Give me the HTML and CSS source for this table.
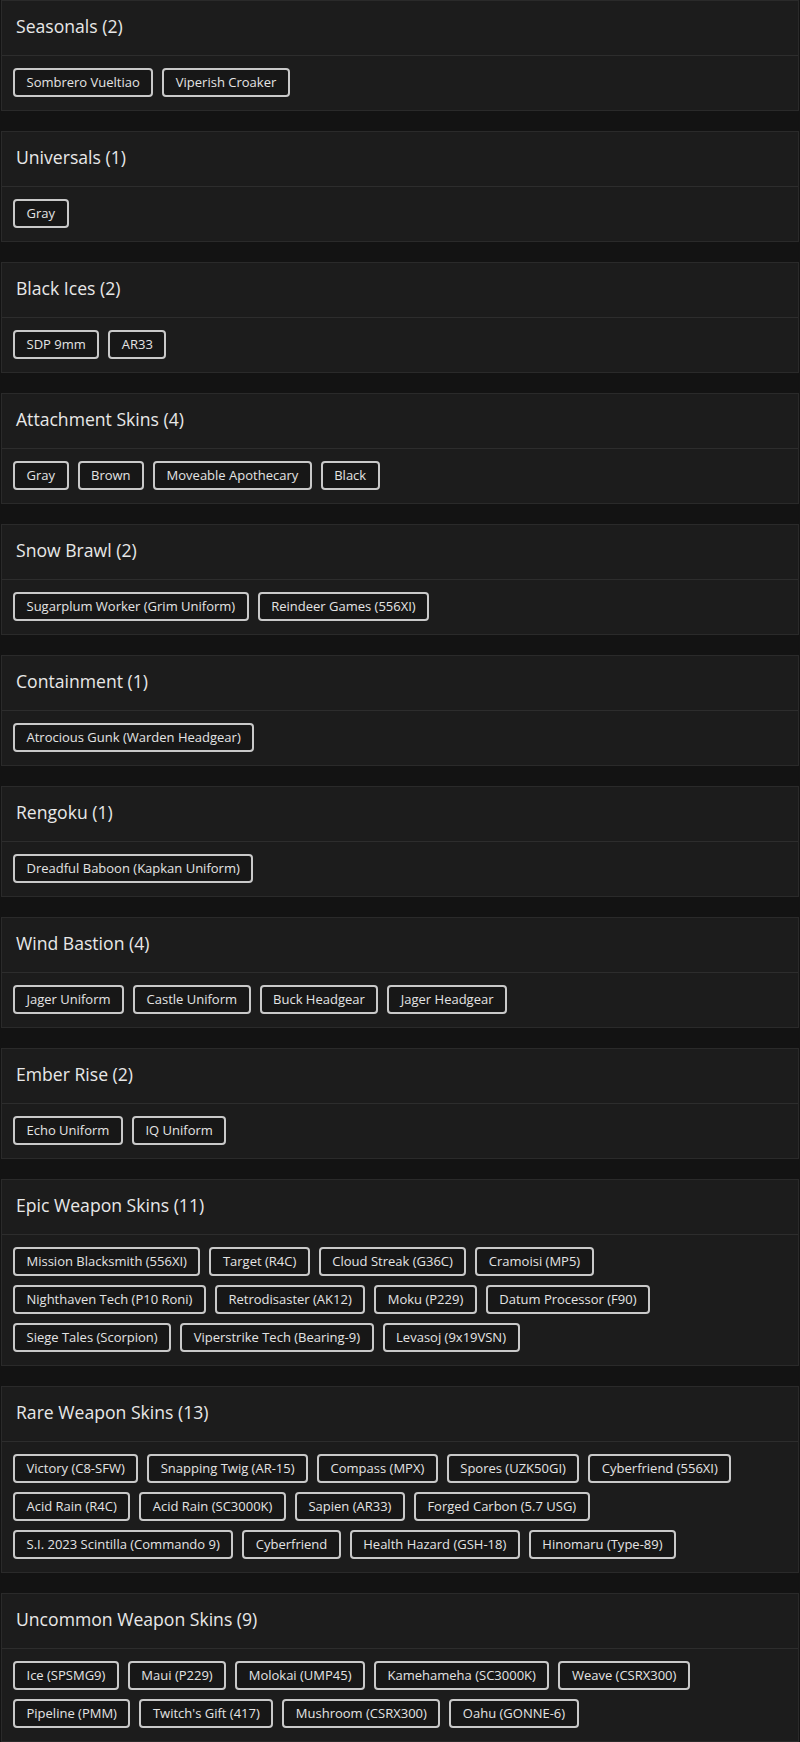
FILE: index.html
```html
<!DOCTYPE html>
<html lang="en">
<head>
<meta charset="utf-8">
<title>Skins</title>
<link rel="stylesheet" href="styles.css">
</head>
<body>
<main class="list">
  <section class="card">
    <h2 class="card-head">Seasonals (2)</h2>
    <div class="card-body">
      <span class="chip">Sombrero Vueltiao</span>
      <span class="chip">Viperish Croaker</span>
    </div>
  </section>
  <section class="card">
    <h2 class="card-head">Universals (1)</h2>
    <div class="card-body">
      <span class="chip">Gray</span>
    </div>
  </section>
  <section class="card">
    <h2 class="card-head">Black Ices (2)</h2>
    <div class="card-body">
      <span class="chip">SDP 9mm</span>
      <span class="chip">AR33</span>
    </div>
  </section>
  <section class="card">
    <h2 class="card-head">Attachment Skins (4)</h2>
    <div class="card-body">
      <span class="chip">Gray</span>
      <span class="chip">Brown</span>
      <span class="chip">Moveable Apothecary</span>
      <span class="chip">Black</span>
    </div>
  </section>
  <section class="card">
    <h2 class="card-head">Snow Brawl (2)</h2>
    <div class="card-body">
      <span class="chip">Sugarplum Worker (Grim Uniform)</span>
      <span class="chip">Reindeer Games (556XI)</span>
    </div>
  </section>
  <section class="card">
    <h2 class="card-head">Containment (1)</h2>
    <div class="card-body">
      <span class="chip">Atrocious Gunk (Warden Headgear)</span>
    </div>
  </section>
  <section class="card">
    <h2 class="card-head">Rengoku (1)</h2>
    <div class="card-body">
      <span class="chip">Dreadful Baboon (Kapkan Uniform)</span>
    </div>
  </section>
  <section class="card">
    <h2 class="card-head">Wind Bastion (4)</h2>
    <div class="card-body">
      <span class="chip">Jager Uniform</span>
      <span class="chip">Castle Uniform</span>
      <span class="chip">Buck Headgear</span>
      <span class="chip">Jager Headgear</span>
    </div>
  </section>
  <section class="card">
    <h2 class="card-head">Ember Rise (2)</h2>
    <div class="card-body">
      <span class="chip">Echo Uniform</span>
      <span class="chip">IQ Uniform</span>
    </div>
  </section>
  <section class="card">
    <h2 class="card-head">Epic Weapon Skins (11)</h2>
    <div class="card-body">
      <span class="chip">Mission Blacksmith (556XI)</span>
      <span class="chip">Target (R4C)</span>
      <span class="chip">Cloud Streak (G36C)</span>
      <span class="chip">Cramoisi (MP5)</span>
      <span class="chip">Nighthaven Tech (P10 Roni)</span>
      <span class="chip">Retrodisaster (AK12)</span>
      <span class="chip">Moku (P229)</span>
      <span class="chip">Datum Processor (F90)</span>
      <span class="chip">Siege Tales (Scorpion)</span>
      <span class="chip">Viperstrike Tech (Bearing-9)</span>
      <span class="chip">Levasoj (9x19VSN)</span>
    </div>
  </section>
  <section class="card">
    <h2 class="card-head">Rare Weapon Skins (13)</h2>
    <div class="card-body">
      <span class="chip">Victory (C8-SFW)</span>
      <span class="chip">Snapping Twig (AR-15)</span>
      <span class="chip">Compass (MPX)</span>
      <span class="chip">Spores (UZK50GI)</span>
      <span class="chip">Cyberfriend (556XI)</span>
      <span class="chip">Acid Rain (R4C)</span>
      <span class="chip">Acid Rain (SC3000K)</span>
      <span class="chip">Sapien (AR33)</span>
      <span class="chip">Forged Carbon (5.7 USG)</span>
      <span class="chip">S.I. 2023 Scintilla (Commando 9)</span>
      <span class="chip">Cyberfriend</span>
      <span class="chip">Health Hazard (GSH-18)</span>
      <span class="chip">Hinomaru (Type-89)</span>
    </div>
  </section>
  <section class="card">
    <h2 class="card-head">Uncommon Weapon Skins (9)</h2>
    <div class="card-body">
      <span class="chip">Ice (SPSMG9)</span>
      <span class="chip">Maui (P229)</span>
      <span class="chip">Molokai (UMP45)</span>
      <span class="chip">Kamehameha (SC3000K)</span>
      <span class="chip">Weave (CSRX300)</span>
      <span class="chip">Pipeline (PMM)</span>
      <span class="chip">Twitch's Gift (417)</span>
      <span class="chip">Mushroom (CSRX300)</span>
      <span class="chip">Oahu (GONNE-6)</span>
    </div>
  </section>
</main>
</body>
</html>
```
FILE: styles.css
```css
html, body {
  margin: 0;
  padding: 0;
  background: #131313;
}

body {
  font-family: "Open Sans", "Noto Sans", sans-serif;
  color: #e6e6e6;
}

.list {
  display: flex;
  flex-direction: column;
  gap: 20px;
  padding: 0 1px;
}

.card {
  background: #1c1c1c;
  border: 1px solid #2a2a2a;
}

.card-head {
  margin: 0;
  padding: 15px 14px 18px;
  font-size: 17.6px;
  line-height: 21px;
  font-weight: 500;
  color: #e8e8e8;
  border-bottom: 1px solid #2d2d2d;
}

.card-body {
  display: flex;
  flex-wrap: wrap;
  gap: 9px;
  padding: 12px 11px 13px;
}

.chip {
  display: inline-block;
  padding: 4px 11.5px;
  font-size: 13px;
  line-height: 17px;
  color: #e4e4e4;
  background: #171717;
  border: 2px solid #c9c9c9;
  border-radius: 4px;
  white-space: nowrap;
}
```
